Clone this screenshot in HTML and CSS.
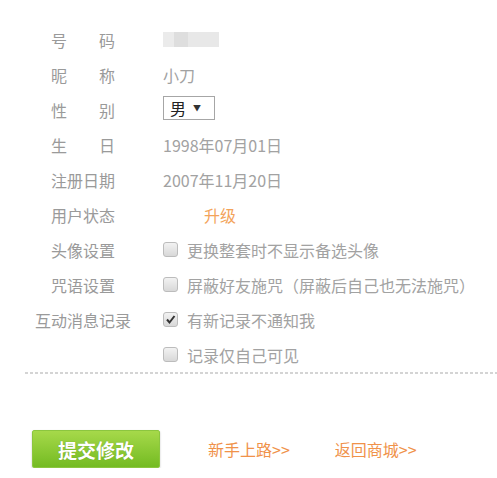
FILE: index.html
```html
<!DOCTYPE html>
<html lang="zh-CN">
<head>
  <meta charset="UTF-8" />
  <meta name="viewport" content="width=device-width, initial-scale=1.0"/>
  <title>个人资料</title>
  <link rel="stylesheet" href="styles.css">
</head>
<body>
  <div class="perfil">
    <div class="linha">
      <span class="rotulo"><span class="curto">号码</span></span>
      <span class="valor"><span class="numero"></span></span>
    </div>
    <div class="linha">
      <span class="rotulo"><span class="curto">昵称</span></span>
      <span class="valor">小刀</span>
    </div>
    <div class="linha">
      <span class="rotulo"><span class="curto">性别</span></span>
      <span class="valor"><span class="seletor">男<span class="seta">▼</span></span></span>
    </div>
    <div class="linha">
      <span class="rotulo"><span class="curto">生日</span></span>
      <span class="valor">1998年07月01日</span>
    </div>
    <div class="linha">
      <span class="rotulo">注册日期</span>
      <span class="valor">2007年11月20日</span>
    </div>
    <div class="linha">
      <span class="rotulo">用户状态</span>
      <span class="valor"><a class="upgrade" href="#">升级</a></span>
    </div>
    <div class="linha">
      <span class="rotulo">头像设置</span>
      <span class="valor"><span class="caixa"></span>更换整套时不显示备选头像</span>
    </div>
    <div class="linha">
      <span class="rotulo">咒语设置</span>
      <span class="valor"><span class="caixa"></span>屏蔽好友施咒（屏蔽后自己也无法施咒）</span>
    </div>
    <div class="linha">
      <span class="rotulo">互动消息记录</span>
      <span class="valor"><span class="caixa"><svg width="11" height="11" viewBox="0 0 11 11"><path d="M2 5.5 L4.5 8.5 L9.5 2" fill="none" stroke="#333" stroke-width="2"/></svg></span>有新记录不通知我</span>
    </div>
    <div class="linha">
      <span class="rotulo"></span>
      <span class="valor"><span class="caixa"></span>记录仅自己可见</span>
    </div>
  </div>

  <div class="pontilhado"></div>

  <div class="acoes">
    <button class="enviar">提交修改</button>
    <a class="link" href="#">新手上路&gt;&gt;</a>
    <a class="link" href="#">返回商城&gt;&gt;</a>
  </div>
</body>
</html>
```

FILE: styles.css
```css
body {
  margin: 0;
  background: #fff;
  font-family: "Noto Sans CJK SC", "Liberation Sans", sans-serif;
  font-size: 16px;
  color: #a2a2a2;
}
.perfil {
  padding: 22px 0 0 35px;
}
.linha {
  display: grid;
  grid-template-columns: 96px 1fr;
  column-gap: 32px;
  height: 35px;
  align-items: center;
}
.rotulo {
  text-align: center;
  color: #9a9a9a;
  line-height: 20px;
}
.curto {
  display: inline-block;
  width: 64px;
  text-align: justify;
  text-align-last: justify;
}
.valor {
  display: flex;
  align-items: center;
  line-height: 20px;
}
.numero {
  display: block;
  width: 56px;
  height: 15px;
  background: linear-gradient(90deg, #ebebeb 0 20%, #dedede 20% 45%, #e8e8e8 45% 100%);
}
.seletor {
  display: inline-flex;
  align-items: center;
  width: 44px;
  height: 22px;
  border: 1px solid #a6a6a6;
  color: #222;
  padding-left: 6px;
  margin-top: -4px;
}
.seta {
  font-size: 8px;
  margin-left: 7px;
  color: #333;
}
.upgrade {
  color: #f3a35a;
  text-decoration: none;
  margin-left: 41px;
}
.caixa {
  display: inline-flex;
  align-items: center;
  justify-content: center;
  width: 13px;
  height: 13px;
  border: 1px solid #bcbcbc;
  border-radius: 3px;
  background: linear-gradient(#f2f2f2, #d8d8d8);
  margin-right: 9px;
}
.pontilhado {
  margin-left: 25px;
  height: 2px;
  background: repeating-linear-gradient(90deg, #d4d4d4 0 3px, transparent 3px 5px);
}
.acoes {
  display: flex;
  align-items: center;
  margin-top: 56px;
  padding-left: 32px;
}
.enviar {
  width: 128px;
  height: 38px;
  border: 1px solid #8cc63f;
  border-radius: 2px;
  background: linear-gradient(#a6d94a, #74bb22);
  box-shadow: 0 1px 2px rgba(0, 0, 0, 0.25);
  color: #fff;
  font-family: "Noto Sans CJK SC", sans-serif;
  font-size: 19px;
  font-weight: bold;
  text-shadow: 0 0 1px #6a9a20;
  margin-right: 48px;
}
.link {
  color: #f0924a;
  text-decoration: none;
  margin-right: 45px;
}
```
